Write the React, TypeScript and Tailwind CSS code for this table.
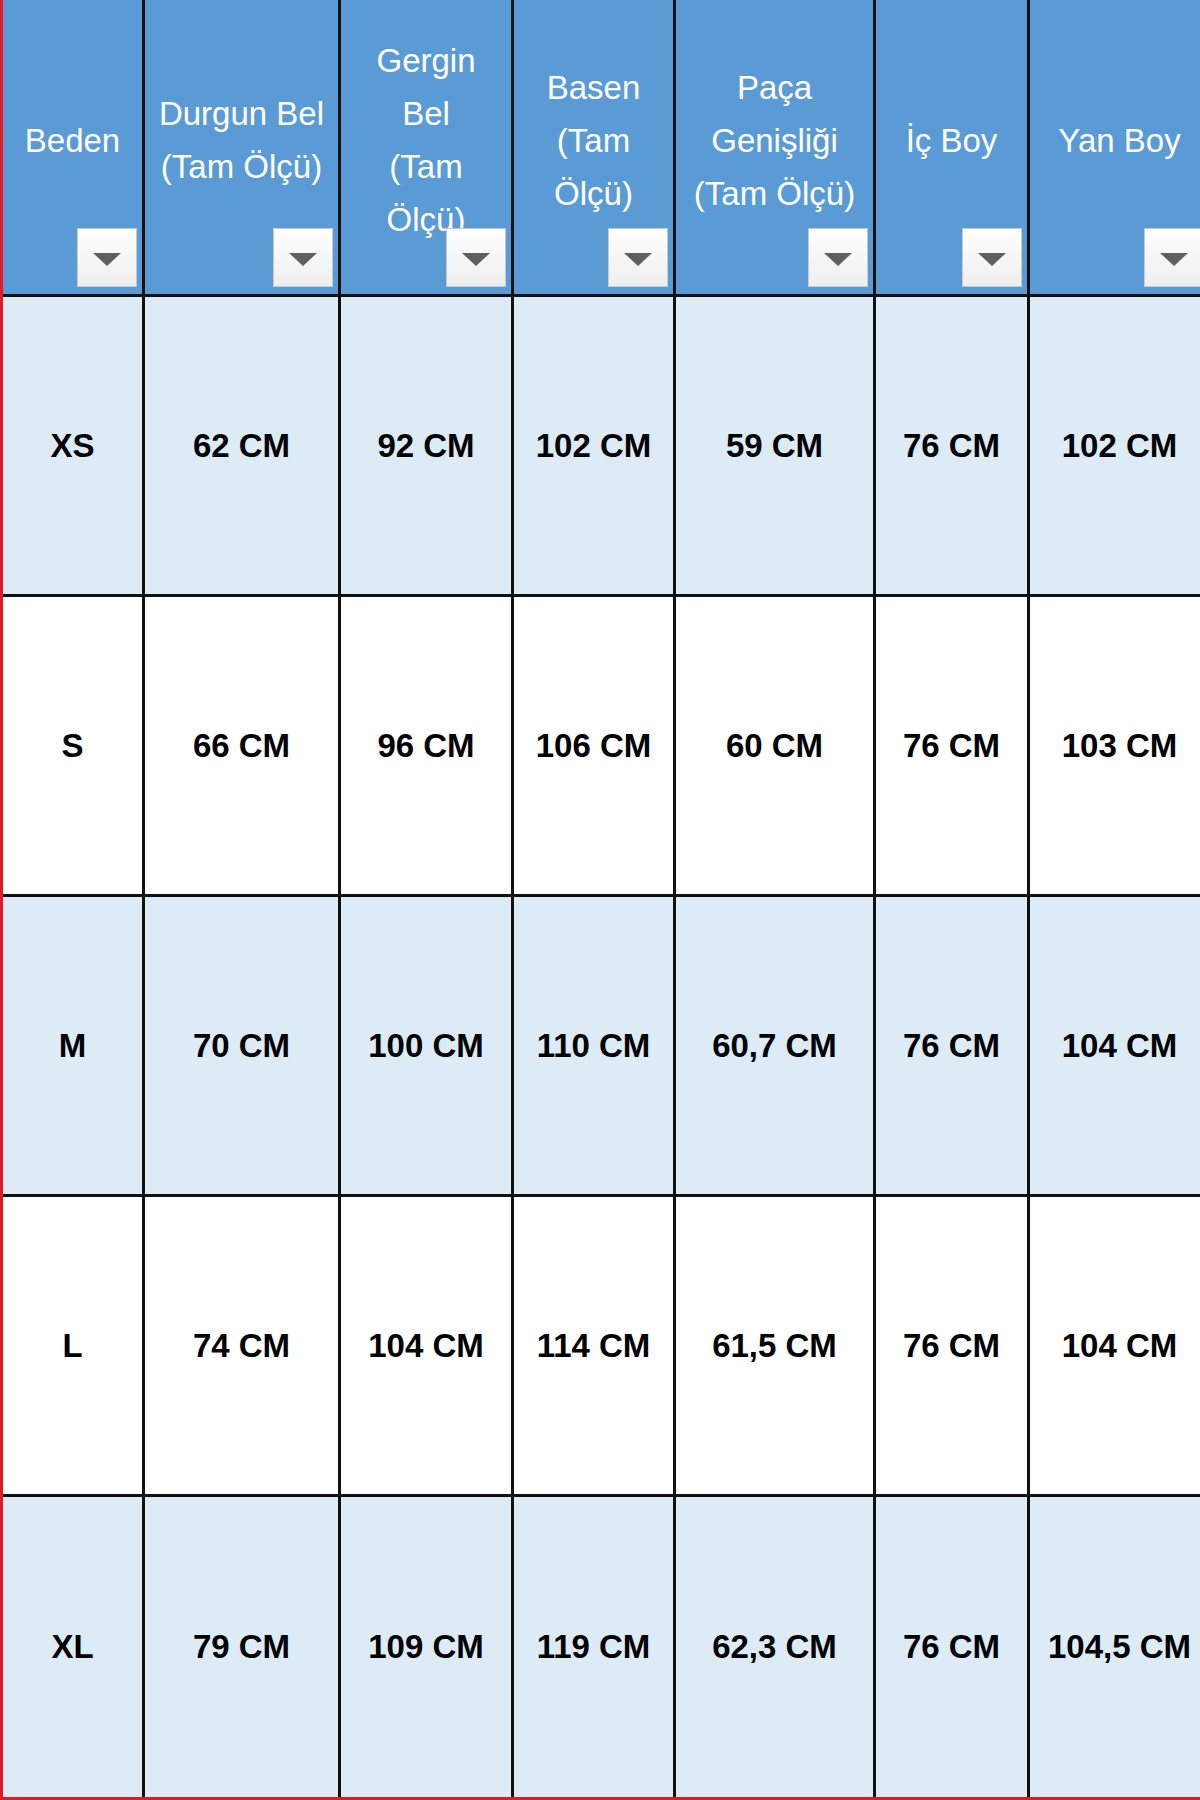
import React from "react";

type Header = {
  readonly lines: string[];
};

const headers: Header[] = [
  { lines: ["Beden"] },
  { lines: ["Durgun Bel", "(Tam Ölçü)"] },
  { lines: ["Gergin", "Bel", "(Tam", "Ölçü)"] },
  { lines: ["Basen", "(Tam", "Ölçü)"] },
  { lines: ["Paça", "Genişliği", "(Tam Ölçü)"] },
  { lines: ["İç Boy"] },
  { lines: ["Yan Boy"] },
];

const rows: string[][] = [
  ["XS", "62 CM", "92 CM", "102 CM", "59 CM", "76 CM", "102 CM"],
  ["S", "66 CM", "96 CM", "106 CM", "60 CM", "76 CM", "103 CM"],
  ["M", "70 CM", "100 CM", "110 CM", "60,7 CM", "76 CM", "104 CM"],
  ["L", "74 CM", "104 CM", "114 CM", "61,5 CM", "76 CM", "104 CM"],
  ["XL", "79 CM", "109 CM", "119 CM", "62,3 CM", "76 CM", "104,5 CM"],
];

function FilterButton() {
  return (
    <div className="absolute right-[5px] bottom-[7px] w-[60px] h-[59px] flex items-center justify-center border border-[#c9c9c9] bg-gradient-to-b from-white to-[#eeeeee]">
      <svg width="28" height="14" viewBox="0 0 28 14" className="mt-[4px]">
        <polygon points="0,0 28,0 14,13" fill="#5f5f5f" />
      </svg>
    </div>
  );
}

function App() {
  // column widths include the 3px right grid line
  const grid =
    "grid grid-cols-[142px_196px_173px_162px_200px_154px_182px] w-[1209px]";

  return (
    <div
      className="w-[1200px] h-[1800px] overflow-hidden bg-white"
      style={{ fontFamily: '"Liberation Sans", Arial, sans-serif' }}
    >
      <div className="w-[1212px] border-l-[3px] border-b-[3px] border-[#e01b24]">
        {/* HEADER ROW */}
        <div className={`${grid} h-[297px]`}>
          {headers.map((h, i) => (
            <div
              key={i}
              className="relative bg-[#5b9bd5] border-b-[3px] border-r-[3px] border-[#111111] flex flex-col items-center justify-center pb-[14px] text-[33px] leading-[53px] text-white text-center"
            >
              {h.lines.map((line) => (
                <span key={line} className="whitespace-nowrap">
                  {line}
                </span>
              ))}
              <FilterButton />
            </div>
          ))}
        </div>

        {/* BODY ROWS */}
        {rows.map((row, r) => (
          <div key={row[0]} className={`${grid} h-[300px]`}>
            {row.map((cell, c) => (
              <div
                key={c}
                className={`flex items-center justify-center border-r-[3px] border-[#111111] text-[33px] font-bold text-black whitespace-nowrap ${
                  r % 2 === 0 ? "bg-[#ddebf7]" : "bg-white"
                } ${r < rows.length - 1 ? "border-b-[3px]" : ""}`}
              >
                {cell}
              </div>
            ))}
          </div>
        ))}
      </div>
    </div>
  );
}

export default App;
